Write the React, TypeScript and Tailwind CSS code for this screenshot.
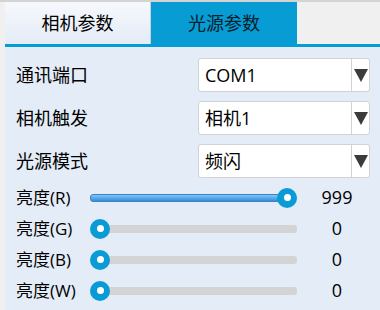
const font = { fontFamily: '"Open Sans", "Noto Sans CJK SC", sans-serif' };

function Select({ value }: { value: string }) {
    return (
        <div className="ml-auto mr-[10px] flex h-full w-[172px] items-stretch rounded-[3px] border border-[#d2d2d2] bg-white">
            <div className="flex flex-1 items-center pl-[6px] text-[18px] text-black">{value}</div>
            <div className="flex w-[18px] items-center justify-center border-l border-[#d2d2d2]">
                <svg width="14" height="13" viewBox="0 0 14 13">
                    <polygon points="0,0 14,0 7,13" fill="#3b3b3b" />
                </svg>
            </div>
        </div>
    );
}

function Slider({ label, value, max }: { label: string; value: number; max: number }) {
    const pct = value / max;
    return (
        <div className="flex h-[31px] items-center">
            <div className="w-[85px] pl-[11px] text-[17px] text-black">{label}</div>
            <div className="relative h-[20px] w-[207px]">
                <div className="absolute left-[10px] right-0 top-[6px] h-[8px] rounded-[3px] bg-[#d4d4d4]" />
                {value > 0 && (
                    <div
                        className="absolute left-0 top-[6px] h-[8px] rounded-[3px] border border-[#4a7fb5] bg-gradient-to-b from-[#7cc8f7] to-[#2f8de0]"
                        style={{ width: `${10 + pct * 187}px` }}
                    />
                )}
                <div
                    className="absolute top-0 flex h-[20px] w-[20px] items-center justify-center rounded-full bg-[#0a9bd6]"
                    style={{ left: `${pct * 187}px` }}
                >
                    <div className="h-[7px] w-[7px] rounded-full bg-white" />
                </div>
            </div>
            <div className="w-[80px] text-center text-[18px] text-black">{value}</div>
        </div>
    );
}

export default function App() {
    return (
        <div className="h-[310px] w-[380px] overflow-hidden border-t-2 border-[#d4d4d4] bg-[#f0f0f0] pl-[5px]" style={font}>
            <div className="flex h-[45px] border-b-[3px] border-[#079cd4]">
                <div className="flex w-[146px] items-center justify-center border-r border-[#c8d0da] bg-gradient-to-b from-[#f6f8fc] to-[#e4ecf7] text-[18px] text-black">
                    相机参数
                </div>
                <div className="flex w-[146px] items-center justify-center bg-[#079cd4] text-[18px] text-[#06202c]">
                    光源参数
                </div>
            </div>
            <div className="h-[263px] bg-[#e4ecf7] pt-[11px]">
                <div className="flex flex-col gap-[9px]">
                    {[
                        ["通讯端口", "COM1"],
                        ["相机触发", "相机1"],
                        ["光源模式", "频闪"],
                    ].map(([label, value]) => (
                        <div key={label} className="flex h-[34px] items-center">
                            <div className="pl-[11px] text-[18px] text-black">{label}</div>
                            <Select value={value} />
                        </div>
                    ))}
                </div>
                <div className="mt-[4px]">
                    <Slider label="亮度(R)" value={999} max={999} />
                    <Slider label="亮度(G)" value={0} max={999} />
                    <Slider label="亮度(B)" value={0} max={999} />
                    <Slider label="亮度(W)" value={0} max={999} />
                </div>
            </div>
        </div>
    );
}
